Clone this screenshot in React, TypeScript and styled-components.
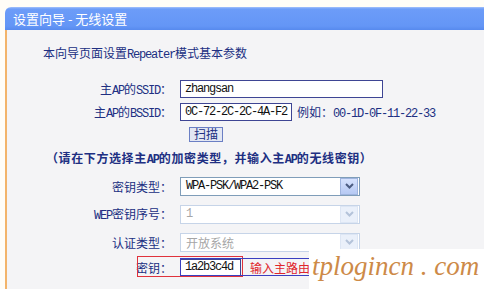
import styled, { createGlobalStyle, css } from "styled-components";

const GlobalStyle = createGlobalStyle`
  html, body {
    margin: 0;
    padding: 0;
  }
  body {
    width: 484px;
    height: 289px;
    overflow: hidden;
    background: #fffdf7;
    font-family: "Noto Sans CJK SC", sans-serif;
    font-size: 12px;
    color: #202f82;
  }
`;

const Page = styled.div`
  position: relative;
  display: flex;
  flex-direction: column;
  height: 289px;
  padding: 7px 0 0 5px;
  box-sizing: border-box;
`;

const Panel = styled.section`
  flex: 1;
  display: flex;
  flex-direction: column;
  border-radius: 6px 0 0 0;
  overflow: hidden;
`;

const TitleBar = styled.header`
  flex: none;
  height: 23px;
  padding-left: 8px;
  background: linear-gradient(#a4c1fb 0, #6c9cf8 2px, #6496f6 19px, #578aee 23px);
  color: #fff;
  font-size: 13px;
  line-height: 23px;
`;

const Content = styled.div`
  flex: 1;
  padding-top: 14px;
  background: #f4f4f6;
  border-left: 2px solid #f3b46a;
`;

const Latin = styled.span`
  font-family: "Liberation Mono", monospace;
  letter-spacing: -1.2px;
`;

const Intro = styled.p`
  margin: 0 0 16px;
  padding-left: 36px;
  height: 18px;
  line-height: 18px;
`;

const Row = styled.div<{ $h: number }>`
  display: grid;
  grid-template-columns: 165px 1fr;
  column-gap: 8px;
  align-items: center;
  height: ${(p) => p.$h}px;
`;

const Label = styled.label`
  text-align: right;
  white-space: nowrap;
`;

const Field = styled.div`
  display: flex;
  align-items: center;
  gap: 5px;
`;

const TextInput = styled.div<{ $w: number; $h?: number }>`
  box-sizing: border-box;
  width: ${(p) => p.$w}px;
  height: ${(p) => p.$h ?? 18}px;
  padding-left: 4px;
  background: #fff;
  border: 1px solid #3e4594;
  color: #111;
  font-family: "Liberation Mono", monospace;
  letter-spacing: -1.2px;
  line-height: ${(p) => (p.$h ?? 18) - 2}px;
`;

const Hint = styled.span`
  white-space: nowrap;
`;

const ScanButton = styled.button`
  box-sizing: border-box;
  width: 34px;
  height: 15px;
  margin-left: 9px;
  padding: 0;
  background: #e3e7f3;
  border: 1px solid #6b7fc4;
  color: #202f82;
  font: inherit;
  line-height: 12px;
`;

const Notice = styled.p`
  margin: 0;
  height: 28px;
  padding-left: 39px;
  line-height: 28px;
  font-weight: 700;
  letter-spacing: 0.6px;
  white-space: nowrap;
`;

const Select = styled.div<{ $disabled?: boolean }>`
  box-sizing: border-box;
  display: flex;
  align-items: center;
  width: 180px;
  height: 19px;
  padding: 1px 1px 1px 5px;
  background: #fff;
  border: 1px solid #7f9db9;
  color: #111;
  ${(p) =>
    p.$disabled &&
    css`
      border-color: #c6d4e8;
      color: #a6a6a6;
    `}
`;

const SelectValue = styled.span<{ $mono?: boolean }>`
  flex: 1;
  ${(p) =>
    p.$mono &&
    css`
      font-family: "Liberation Mono", monospace;
      letter-spacing: -1.2px;
    `}
`;

const DropButton = styled.span<{ $disabled?: boolean }>`
  display: flex;
  align-items: center;
  justify-content: center;
  width: 16px;
  height: 15px;
  background: linear-gradient(#d6e2fd, #b6c9f3);
  border: 1px solid #9fb4de;
  color: #4c5d82;
  ${(p) =>
    p.$disabled &&
    css`
      background: #eaf0fa;
      border-color: #dde6f4;
      color: #b4c3d9;
    `}
`;

const Note = styled.span`
  margin-left: 4px;
  color: #e0262c;
  white-space: nowrap;
`;

const RedMark = styled.div`
  position: absolute;
  left: 137px;
  top: 256px;
  width: 106px;
  height: 21px;
  box-sizing: border-box;
  border: 1px solid #e0323c;
`;

const BlueMark = styled.div`
  position: absolute;
  left: 180px;
  top: 258px;
  width: 160px;
  height: 18px;
  box-sizing: border-box;
  border: 1px solid #3a3fc0;
`;

const Watermark = styled.div`
  position: absolute;
  left: 309px;
  top: 249px;
  right: 0;
  bottom: 0;
  padding-left: 3px;
  background: #fff;
  color: #cd8a48;
  font-family: "Liberation Serif", serif;
  font-style: italic;
  font-size: 27px;
  line-height: 34px;
  white-space: nowrap;
`;

function Chevron() {
  return (
    <svg width="9" height="6" viewBox="0 0 9 6">
      <polyline points="1,1 4.5,4.5 8,1" fill="none" stroke="currentColor" strokeWidth="2" />
    </svg>
  );
}

function Dropdown({ value, mono, disabled }: { value: string; mono?: boolean; disabled?: boolean }) {
  return (
    <Select $disabled={disabled}>
      <SelectValue $mono={mono}>{value}</SelectValue>
      <DropButton $disabled={disabled}>
        <Chevron />
      </DropButton>
    </Select>
  );
}

export default function App() {
  return (
    <Page>
      <GlobalStyle />
      <Panel>
        <TitleBar>设置向导 - 无线设置</TitleBar>
        <Content>
          <Intro>
            本向导页面设置<Latin>Repeater</Latin>模式基本参数
          </Intro>
          <Row $h={22}>
            <Label>
              主<Latin>AP</Latin>的<Latin>SSID</Latin>：
            </Label>
            <Field>
              <TextInput $w={203}>zhangsan</TextInput>
            </Field>
          </Row>
          <Row $h={24}>
            <Label>
              主<Latin>AP</Latin>的<Latin>BSSID</Latin>：
            </Label>
            <Field>
              <TextInput $w={112}>0C-72-2C-2C-4A-F2</TextInput>
              <Hint>
                例如：<Latin>00-1D-0F-11-22-33</Latin>
              </Hint>
            </Field>
          </Row>
          <Row $h={20}>
            <span />
            <Field>
              <ScanButton>扫描</ScanButton>
            </Field>
          </Row>
          <Notice>
            （请在下方选择主<Latin>AP</Latin>的加密类型，并输入主<Latin>AP</Latin>的无线密钥）
          </Notice>
          <Row $h={28}>
            <Label>密钥类型：</Label>
            <Field>
              <Dropdown value="WPA-PSK/WPA2-PSK" mono />
            </Field>
          </Row>
          <Row $h={28}>
            <Label>
              <Latin>WEP</Latin>密钥序号：
            </Label>
            <Field>
              <Dropdown value="1" mono disabled />
            </Field>
          </Row>
          <Row $h={28}>
            <Label>认证类型：</Label>
            <Field>
              <Dropdown value="开放系统" disabled />
            </Field>
          </Row>
          <Row $h={22}>
            <Label>密钥：</Label>
            <Field>
              <TextInput $w={61} $h={17}>1a2b3c4d</TextInput>
              <Note>输入主路由</Note>
            </Field>
          </Row>
        </Content>
      </Panel>
      <RedMark />
      <BlueMark />
      <Watermark>tplogincn . com</Watermark>
    </Page>
  );
}
